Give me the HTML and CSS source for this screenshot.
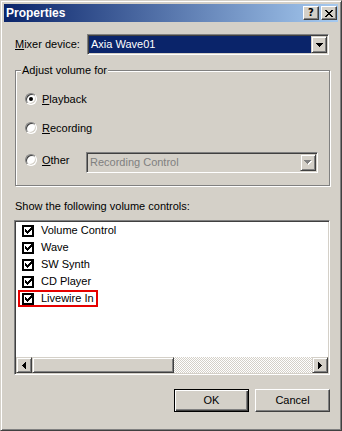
FILE: index.html
```html
<!DOCTYPE html>
<html lang="en">
<head>
    <meta charset="UTF-8">
    <meta name="viewport" content="width=device-width, initial-scale=1.0">
    <title>Properties</title>
    <link rel="stylesheet" href="styles.css">
</head>
<body>
    <div class="window">
        <div class="titlebar">
            <span class="title">Properties</span>
            <div class="caption-buttons">
                <span class="cap-btn help">?</span>
                <span class="cap-btn">
                    <svg width="8" height="7" viewBox="0 0 8 7"><path d="M0 0h2v1h-2z M6 0h2v1h-2z M1 1h2v1h-2z M5 1h2v1h-2z M2 2h4v1h-4z M3 3h2v1h-2z M2 4h4v1h-4z M1 5h2v1h-2z M5 5h2v1h-2z M0 6h2v1h-2z M6 6h2v1h-2z"/></svg>
                </span>
            </div>
        </div>

        <div class="content">
            <div class="mixer-row">
                <span class="mixer-label"><u>M</u>ixer device:</span>
                <div class="combo mixer-combo">
                    <span class="combo-value selected">Axia Wave01</span>
                    <span class="combo-btn">
                        <svg width="7" height="4" viewBox="0 0 7 4"><path d="M0 0h7v1h-7z M1 1h5v1h-5z M2 2h3v1h-3z M3 3h1v1h-1z"/></svg>
                    </span>
                </div>
            </div>

            <div class="group">
                <span class="group-title">Adjust volume for</span>
                <div class="radio-row row-playback">
                    <span class="radio checked"></span>
                    <span><u>P</u>layback</span>
                </div>
                <div class="radio-row row-recording">
                    <span class="radio"></span>
                    <span><u>R</u>ecording</span>
                </div>
                <div class="radio-row row-other">
                    <span class="radio"></span>
                    <span class="other-label"><u>O</u>ther</span>
                    <div class="combo other-combo disabled">
                        <span class="combo-value">Recording Control</span>
                        <span class="combo-btn">
                            <svg width="8" height="5" viewBox="0 0 8 5"><path fill="#fff" d="M1 1h7v1h-7z M2 2h5v1h-5z M3 3h3v1h-3z M4 4h1v1h-1z"/><path fill="#808080" d="M0 0h7v1h-7z M1 1h5v1h-5z M2 2h3v1h-3z M3 3h1v1h-1z"/></svg>
                        </span>
                    </div>
                </div>
            </div>

            <div class="list-caption">Show the following volume controls:</div>

            <div class="listbox">
                <div class="list-items">
                    <div class="list-item"><span class="check"><svg width="7" height="7" viewBox="0 0 7 7"><path d="M6 0h1v1h-1z M5 1h2v1h-2z M0 2h1v1h-1z M4 2h3v1h-3z M0 3h2v1h-2z M3 3h3v1h-3z M0 4h5v1h-5z M1 5h3v1h-3z M2 6h1v1h-1z"/></svg></span>Volume Control</div>
                    <div class="list-item"><span class="check"><svg width="7" height="7" viewBox="0 0 7 7"><path d="M6 0h1v1h-1z M5 1h2v1h-2z M0 2h1v1h-1z M4 2h3v1h-3z M0 3h2v1h-2z M3 3h3v1h-3z M0 4h5v1h-5z M1 5h3v1h-3z M2 6h1v1h-1z"/></svg></span>Wave</div>
                    <div class="list-item"><span class="check"><svg width="7" height="7" viewBox="0 0 7 7"><path d="M6 0h1v1h-1z M5 1h2v1h-2z M0 2h1v1h-1z M4 2h3v1h-3z M0 3h2v1h-2z M3 3h3v1h-3z M0 4h5v1h-5z M1 5h3v1h-3z M2 6h1v1h-1z"/></svg></span>SW Synth</div>
                    <div class="list-item"><span class="check"><svg width="7" height="7" viewBox="0 0 7 7"><path d="M6 0h1v1h-1z M5 1h2v1h-2z M0 2h1v1h-1z M4 2h3v1h-3z M0 3h2v1h-2z M3 3h3v1h-3z M0 4h5v1h-5z M1 5h3v1h-3z M2 6h1v1h-1z"/></svg></span>CD Player</div>
                    <div class="list-item marked"><span class="check"><svg width="7" height="7" viewBox="0 0 7 7"><path d="M6 0h1v1h-1z M5 1h2v1h-2z M0 2h1v1h-1z M4 2h3v1h-3z M0 3h2v1h-2z M3 3h3v1h-3z M0 4h5v1h-5z M1 5h3v1h-3z M2 6h1v1h-1z"/></svg></span>Livewire In</div>
                </div>
                <div class="hscroll">
                    <span class="sb-btn">
                        <svg width="4" height="7" viewBox="0 0 4 7"><path d="M3 0h1v7h-1z M2 1h1v5h-1z M1 2h1v3h-1z M0 3h1v1h-1z"/></svg>
                    </span>
                    <span class="sb-thumb"></span>
                    <span class="sb-track"></span>
                    <span class="sb-btn">
                        <svg width="4" height="7" viewBox="0 0 4 7"><path d="M0 0h1v7h-1z M1 1h1v5h-1z M2 2h1v3h-1z M3 3h1v1h-1z"/></svg>
                    </span>
                </div>
            </div>

            <div class="buttons">
                <button type="button" class="btn default">OK</button>
                <button type="button" class="btn">Cancel</button>
            </div>
        </div>
    </div>
</body>
</html>
```

FILE: styles.css
```css
body {
    margin: 0;
    background-color: #d4d0c8;
    font-family: "Liberation Sans", Arial, sans-serif;
    font-size: 11px;
    line-height: 13px;
    color: #000;
}

.window {
    width: 342px;
    height: 431px;
    box-sizing: border-box;
    padding: 3px;
    background-color: #d4d0c8;
    border: 1px solid;
    border-color: #d4d0c8 #404040 #404040 #d4d0c8;
    box-shadow: inset 1px 1px #fff, inset -1px -1px #808080;
}

.titlebar {
    height: 18px;
    display: flex;
    align-items: center;
    padding: 0 1px 0 2px;
    background: linear-gradient(to right, #0a246a, #a6caf0);
}

.title {
    flex: 1;
    color: #fff;
    font-weight: bold;
    font-size: 12px;
}

.caption-buttons {
    display: flex;
    gap: 2px;
}

.cap-btn {
    width: 16px;
    height: 14px;
    box-sizing: border-box;
    display: flex;
    align-items: center;
    justify-content: center;
    background-color: #d4d0c8;
    border: 1px solid;
    border-color: #fff #404040 #404040 #fff;
    box-shadow: inset -1px -1px #808080;
}

.cap-btn.help {
    font-family: "DejaVu Sans", sans-serif;
    font-weight: bold;
    font-size: 10px;
    line-height: 12px;
}

.content {
    padding-left: 11px;
}

/* mixer device */
.mixer-row {
    display: flex;
    align-items: center;
    margin-top: 12px;
    height: 21px;
}

.mixer-label {
    width: 72px;
}

.combo {
    display: flex;
    height: 21px;
    box-sizing: border-box;
    padding: 1px;
    background-color: #fff;
    border: 1px solid;
    border-color: #808080 #fff #fff #808080;
    box-shadow: inset 1px 1px #404040, inset -1px -1px #d4d0c8;
}

.mixer-combo {
    width: 242px;
}

.combo-value {
    flex: 1;
    padding-left: 2px;
    line-height: 17px;
}

.combo-value.selected {
    background-color: #0a246a;
    color: #fff;
}

.combo-btn {
    width: 16px;
    height: 17px;
    box-sizing: border-box;
    display: flex;
    align-items: center;
    justify-content: center;
    background-color: #d4d0c8;
    border: 1px solid;
    border-color: #d4d0c8 #404040 #404040 #d4d0c8;
    box-shadow: inset 1px 1px #fff, inset -1px -1px #808080;
}

.combo.disabled {
    background-color: #d4d0c8;
    color: #808080;
}

.other-combo {
    width: 232px;
}

/* group box */
.group {
    margin-top: 15px;
    width: 315px;
    height: 116px;
    box-sizing: border-box;
    border: 1px solid #808080;
    box-shadow: 1px 1px #fff, inset 1px 1px #fff;
}

.group-title {
    display: table;
    margin: -7px 0 0 5px;
    padding: 0 1px;
    background-color: #d4d0c8;
}

.radio-row {
    display: flex;
    align-items: center;
    height: 12px;
    padding-left: 9px;
}

.row-playback {
    margin-top: 16px;
}

.row-recording {
    margin-top: 17px;
}

.row-other {
    margin-top: 18px;
    height: 21px;
    align-items: flex-start;
}

.row-other .radio,
.row-other .other-label {
    margin-top: 2px;
}

.other-label {
    width: 44px;
}

.radio {
    position: relative;
    flex: none;
    width: 12px;
    height: 12px;
    box-sizing: border-box;
    margin-right: 5px;
    border-radius: 50%;
    background-color: #fff;
    border: 1px solid;
    border-color: #808080 #fff #fff #808080;
    box-shadow: inset 1px 1px #404040, inset -1px -1px #d4d0c8;
}

.radio.checked::after {
    content: '';
    position: absolute;
    left: 3px;
    top: 3px;
    width: 4px;
    height: 4px;
    border-radius: 50%;
    background-color: #000;
}

/* list of controls */
.list-caption {
    margin-top: 14px;
}

.listbox {
    margin: 7px 0 0 -1px;
    width: 316px;
    height: 155px;
    box-sizing: border-box;
    padding: 1px;
    display: flex;
    flex-direction: column;
    background-color: #fff;
    border: 1px solid;
    border-color: #808080 #fff #fff #808080;
    box-shadow: inset 1px 1px #404040, inset -1px -1px #d4d0c8;
}

.list-items {
    flex: 1;
}

.list-item {
    display: flex;
    align-items: center;
    width: max-content;
    height: 17px;
    box-sizing: border-box;
    margin-left: 2px;
    padding: 0 2px;
    border: 2px solid transparent;
}

.list-item.marked {
    border-color: #e60000;
}

.check {
    width: 12px;
    height: 12px;
    box-sizing: border-box;
    margin-right: 7px;
    display: flex;
    align-items: center;
    justify-content: center;
    background-color: #fff;
    border: 2px solid #000;
}

.hscroll {
    display: flex;
    height: 16px;
}

.sb-btn,
.sb-thumb {
    height: 16px;
    box-sizing: border-box;
    background-color: #d4d0c8;
    border: 1px solid;
    border-color: #d4d0c8 #404040 #404040 #d4d0c8;
    box-shadow: inset 1px 1px #fff, inset -1px -1px #808080;
}

.sb-btn {
    width: 16px;
    display: flex;
    align-items: center;
    justify-content: center;
}

.sb-thumb {
    width: 142px;
}

.sb-track {
    flex: 1;
    background: repeating-conic-gradient(#d4d0c8 0 25%, #fff 0 50%) 0 0 / 2px 2px;
}

/* dialog buttons */
.buttons {
    display: flex;
    gap: 6px;
    margin-top: 14px;
    padding-left: 159px;
}

.btn {
    width: 75px;
    height: 23px;
    box-sizing: border-box;
    padding: 0;
    font: inherit;
    color: #000;
    background-color: #d4d0c8;
    border: 1px solid;
    border-color: #fff #404040 #404040 #fff;
    box-shadow: inset -1px -1px #808080;
}

.btn.default {
    border-color: #000;
    box-shadow: inset 1px 1px #fff, inset -1px -1px #404040, inset -2px -2px #808080;
}
```
